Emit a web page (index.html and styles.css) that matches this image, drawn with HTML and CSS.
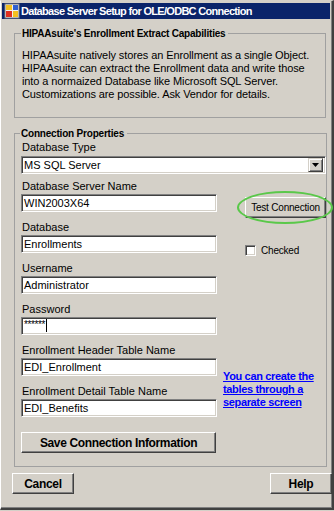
FILE: index.html
```html
<!DOCTYPE html>
<html lang="en">
<head>
    <meta charset="UTF-8">
    <meta name="viewport" content="width=device-width, initial-scale=1.0">
    <title>Database Server Setup for OLE/ODBC Connection</title>
    <link rel="stylesheet" href="styles.css">
</head>
<body>
    <div class="window">
        <div class="titlebar">
            <svg class="app-icon" width="16" height="16" viewBox="0 0 16 16">
                <rect x="1" y="1" width="14" height="14" fill="#f0f0f0" stroke="#7f7f7f"/>
                <rect x="2" y="2" width="6" height="5" fill="#f4c020"/>
                <rect x="2" y="8" width="6" height="6" fill="#e03020"/>
                <rect x="9" y="2" width="5" height="5" fill="#3060d0"/>
                <rect x="9" y="8" width="5" height="6" fill="#f4c020"/>
            </svg>
            <span class="title">Database Server Setup for OLE/ODBC Connection</span>
        </div>

        <div class="content">
            <fieldset class="group">
                <legend>HIPAAsuite's Enrollment Extract Capabilities</legend>
                <p class="info">HIPAAsuite natively stores an Enrollment as a single Object. HIPAAsuite can extract the Enrollment data and write those into a normaized Database like Microsoft SQL Server. Customizations are possible. Ask Vendor for details.</p>
            </fieldset>

            <fieldset class="group conn">
                <legend>Connection Properties</legend>
                <div class="form">
                    <div class="field wide">
                        <label>Database Type</label>
                        <div class="select">
                            <span>MS SQL Server</span>
                            <span class="drop">
                                <svg width="7" height="4" viewBox="0 0 7 4"><path d="M0 0h7L3.5 4z" fill="#000"/></svg>
                            </span>
                        </div>
                    </div>

                    <div class="field">
                        <label>Database Server Name</label>
                        <div class="input">WIN2003X64</div>
                    </div>
                    <div class="side test-wrap">
                        <button class="btn test">Test Connection</button>
                    </div>

                    <div class="field">
                        <label>Database</label>
                        <div class="input">Enrollments</div>
                    </div>
                    <div class="side check-wrap">
                        <span class="checkbox"></span>
                        <span class="check-label">Checked</span>
                    </div>

                    <div class="field">
                        <label>Username</label>
                        <div class="input">Administrator</div>
                    </div>
                    <div class="side"></div>

                    <div class="field">
                        <label>Password</label>
                        <div class="input pass"><span class="stars">******</span><span class="caret"></span></div>
                    </div>
                    <div class="side"></div>

                    <div class="field">
                        <label>Enrollment Header Table Name</label>
                        <div class="input">EDI_Enrollment</div>
                    </div>
                    <div class="side link-wrap">
                        <a href="#" class="link">You can create the tables through a separate screen</a>
                    </div>

                    <div class="field">
                        <label>Enrollment Detail Table Name</label>
                        <div class="input">EDI_Benefits</div>
                    </div>

                    <div class="field save-row">
                        <button class="btn save">Save Connection Information</button>
                    </div>
                </div>
            </fieldset>

            <div class="footer">
                <button class="btn bold small">Cancel</button>
                <button class="btn bold small">Help</button>
            </div>
        </div>
    </div>
</body>
</html>
```

FILE: styles.css
```css
body {
    margin: 0;
    width: 334px;
    height: 511px;
    overflow: hidden;
    font-family: "Liberation Sans", Arial, sans-serif;
    font-size: 11px;
    background: #d4d0c8;
}

.window {
    box-sizing: border-box;
    width: 334px;
    height: 510px;
    background: #d4d0c8;
    border-top: 1px solid #d4d0c8;
    border-left: 1px solid #fff;
    border-right: 2px solid #404040;
    border-bottom: 2px solid #404040;
    box-shadow: inset -1px -1px #808080;
    padding: 2px 2px 0 1px;
}

.titlebar {
    height: 16px;
    background: #0a246a;
    display: flex;
    align-items: center;
    padding: 0 2px;
}

.app-icon {
    margin-right: 1px;
}

.title {
    color: #fff;
    font-weight: bold;
    font-size: 11px;
    letter-spacing: -0.7px;
}

.content {
    padding: 8px 4px 0 12px;
}

.group {
    margin: 0;
    border: 1px solid #a0a0a0;
    padding: 0 6px 16px 7px;
}

.group legend {
    font-size: 10px;
    font-weight: bold;
    letter-spacing: -0.2px;
    padding: 0 3px 0 1px;
    margin-left: -1px;
    line-height: 13px;
}

.info {
    margin: 9px 0 0;
    line-height: 13px;
    font-size: 11px;
    letter-spacing: -0.1px;
    color: #000;
}

.conn {
    margin-top: 9px;
    padding: 1px 0 13px 6px;
}

.form {
    display: grid;
    grid-template-columns: 196px 1fr;
    column-gap: 6px;
}

.field {
    display: flex;
    flex-direction: column;
    margin-bottom: 9px;
}

.field label {
    line-height: 13px;
    margin: 0 0 1px 1px;
}

.wide {
    grid-column: 1 / 3;
    margin-bottom: 6px;
}

.wide label {
    margin-bottom: 2px;
}

.select,
.input {
    box-sizing: border-box;
    height: 18px;
    background: #fff;
    border-top: 1px solid #808080;
    border-left: 1px solid #808080;
    border-right: 1px solid #fff;
    border-bottom: 1px solid #fff;
    box-shadow: inset 1px 1px #404040, inset -1px -1px #d4d0c8;
    padding: 1px 2px 0;
    line-height: 15px;
    white-space: nowrap;
    overflow: hidden;
}

.select {
    display: flex;
    justify-content: space-between;
    padding-right: 2px;
}

.drop {
    width: 15px;
    height: 14px;
    box-sizing: border-box;
    background: #d4d0c8;
    border-top: 1px solid #d4d0c8;
    border-left: 1px solid #d4d0c8;
    border-right: 1px solid #404040;
    border-bottom: 1px solid #404040;
    box-shadow: inset 1px 1px #fff, inset -1px -1px #808080;
    display: flex;
    align-items: center;
    justify-content: center;
}

.pass {
    display: flex;
    align-items: flex-start;
}

.stars {
    font-size: 10px;
    letter-spacing: -0.4px;
    line-height: 12px;
}

.caret {
    width: 1px;
    height: 13px;
    background: #000;
    margin-left: 1px;
}

.side {
    display: flex;
}

.test-wrap {
    align-items: flex-end;
    margin-bottom: 9px;
}

.btn {
    font-family: "Liberation Sans", Arial, sans-serif;
    font-size: 10px;
    color: #000;
    background: #d4d0c8;
    border-top: 1px solid #fff;
    border-left: 1px solid #fff;
    border-right: 1px solid #404040;
    border-bottom: 1px solid #404040;
    box-shadow: inset -1px -1px #808080;
    padding: 0;
}

.test {
    width: 81px;
    height: 21px;
    margin-left: 22px;
    margin-bottom: -6px;
    letter-spacing: -0.2px;
    position: relative;
}

.test::after {
    content: "";
    position: absolute;
    left: -9px;
    top: -7px;
    width: 96px;
    height: 33px;
    border: 2px solid #5ac84a;
    border-radius: 50%;
    box-sizing: border-box;
}

.check-wrap {
    align-items: flex-start;
    padding: 24px 0 0 22px;
}

.checkbox {
    width: 11px;
    height: 11px;
    box-sizing: border-box;
    background: #fff;
    border-top: 1px solid #808080;
    border-left: 1px solid #808080;
    border-right: 1px solid #fff;
    border-bottom: 1px solid #fff;
    box-shadow: inset 1px 1px #404040, inset -1px -1px #d4d0c8;
}

.check-label {
    font-size: 10px;
    letter-spacing: -0.2px;
    margin-left: 5px;
    line-height: 12px;
}

.link-wrap {
    grid-row: span 2;
    padding-top: 26px;
    align-items: flex-start;
}

.link {
    color: #0000ff;
    font-weight: bold;
    font-size: 11px;
    letter-spacing: -0.35px;
    line-height: 13px;
    width: 100px;
}

.save-row {
    margin: 6px 0 0;
}

.save {
    width: 195px;
    height: 21px;
    font-weight: bold;
    font-size: 12px;
    letter-spacing: -0.35px;
}

.footer {
    display: flex;
    justify-content: space-between;
    margin: 6px -6px 0 -2px;
}

.small {
    width: 62px;
    height: 21px;
    font-size: 12px;
    font-weight: bold;
    letter-spacing: -0.3px;
}
```
